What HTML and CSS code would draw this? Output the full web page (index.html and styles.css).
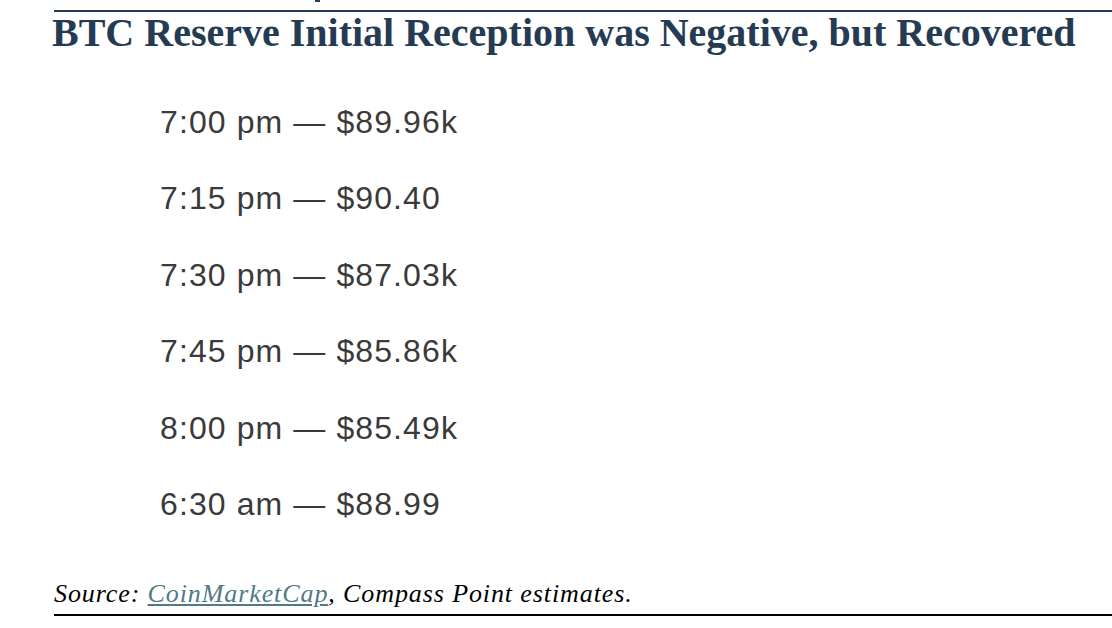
FILE: index.html
```html
<!DOCTYPE html>
<html>
<head>
<meta charset="utf-8">
<link rel="stylesheet" href="styles.css">
</head>
<body>
<div class="cut"><span class="cut-mark"></span></div>
<section class="chart">
  <h2 class="title">BTC Reserve Initial Reception was Negative, but Recovered</h2>
  <ul class="timeline">
    <li>7:00 pm — $89.96k</li>
    <li>7:15 pm — $90.40</li>
    <li>7:30 pm — $87.03k</li>
    <li>7:45 pm — $85.86k</li>
    <li>8:00 pm — $85.49k</li>
    <li>6:30 am — $88.99</li>
  </ul>
  <p class="source">Source: <a href="#">CoinMarketCap</a>, Compass Point estimates.</p>
</section>
</body>
</html>
```
FILE: styles.css
```css
html, body {
  margin: 0;
  padding: 0;
  background: #ffffff;
}
.cut {
  height: 2px;
  display: flex;
}
.cut-mark {
  margin-left: 315px;
  width: 5px;
  height: 2px;
  background: #2c3e50;
}
.chart {
  margin: 8px 0 0 54px;
  border-top: 2px solid #223a52;
  border-bottom: 2px solid #000;
}
.title {
  margin: -1px 0 0 -2px;
  font-family: "Liberation Serif", "Times New Roman", serif;
  font-weight: bold;
  font-size: 40px;
  line-height: 44px;
  color: #243b53;
}
.timeline {
  list-style: none;
  margin: 29px 0 0 0;
  padding: 0 0 0 106px;
  font-family: "Liberation Sans", Arial, sans-serif;
  font-size: 32px;
  letter-spacing: 1.1px;
  color: #3a3a3a;
}
.timeline li {
  height: 76.4px;
  line-height: 76.4px;
}
.source {
  margin: 0;
  padding: 38px 0 6px 0;
  font-family: "Liberation Serif", "Times New Roman", serif;
  font-style: italic;
  font-size: 26px;
  letter-spacing: 0.9px;
  line-height: 28px;
  color: #000;
}
.source a {
  color: #4f7a86;
  text-decoration: underline;
}
```
